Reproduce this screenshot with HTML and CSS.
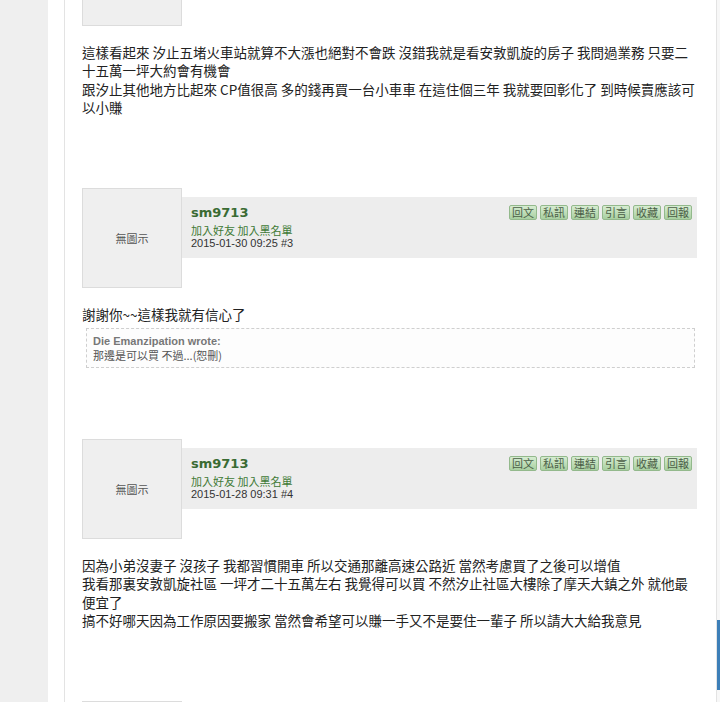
FILE: index.html
```html
<!DOCTYPE html>
<html lang="zh-Hant">
<head>
  <meta charset="UTF-8">
  <title>討論區 - 汐止 安敦凱旋</title>
  <link rel="stylesheet" href="styles.css">
</head>
<body>
  <div class="page">
    <!-- THREAD COLUMN -->
    <main class="thread">

      <!-- post #2 (scrolled, only bottom of avatar visible) -->
      <div class="post post-scrolled">
        <div class="post-head">
          <div class="avatar"></div>
        </div>
        <div class="post-body">
          這樣看起來 汐止五堵火車站就算不大漲也絕對不會跌 沒錯我就是看安敦凱旋的房子 我問過業務 只要二十五萬一坪大約會有機會<br>
          跟汐止其他地方比起來 CP值很高 多的錢再買一台小車車 在這住個三年 我就要回彰化了 到時候賣應該可以小賺
        </div>
      </div>

      <!-- post #3 -->
      <div class="post">
        <div class="post-head">
          <div class="avatar">無圖示</div>
          <div class="user-bar">
            <div class="user-info">
              <div class="user-name">sm9713</div>
              <div class="user-links"><a href="#">加入好友</a> <a href="#">加入黑名單</a></div>
              <div class="post-meta">2015-01-30 09:25 #3</div>
            </div>
            <div class="post-actions">
              <span class="act-btn">回文</span>
              <span class="act-btn">私訊</span>
              <span class="act-btn">連結</span>
              <span class="act-btn">引言</span>
              <span class="act-btn">收藏</span>
              <span class="act-btn">回報</span>
            </div>
          </div>
        </div>
        <div class="post-body">
          謝謝你~~這樣我就有信心了
          <div class="quote">
            <div class="quote-author">Die Emanzipation wrote:</div>
            <div class="quote-text">那邊是可以買 不過...(恕刪)</div>
          </div>
        </div>
      </div>

      <!-- post #4 -->
      <div class="post">
        <div class="post-head">
          <div class="avatar">無圖示</div>
          <div class="user-bar">
            <div class="user-info">
              <div class="user-name">sm9713</div>
              <div class="user-links"><a href="#">加入好友</a> <a href="#">加入黑名單</a></div>
              <div class="post-meta">2015-01-28 09:31 #4</div>
            </div>
            <div class="post-actions">
              <span class="act-btn">回文</span>
              <span class="act-btn">私訊</span>
              <span class="act-btn">連結</span>
              <span class="act-btn">引言</span>
              <span class="act-btn">收藏</span>
              <span class="act-btn">回報</span>
            </div>
          </div>
        </div>
        <div class="post-body">
          因為小弟沒妻子 沒孩子 我都習慣開車 所以交通那離高速公路近 當然考慮買了之後可以增值<br>
          我看那裏安敦凱旋社區 一坪才二十五萬左右 我覺得可以買 不然汐止社區大樓除了摩天大鎮之外 就他最便宜了<br>
          搞不好哪天因為工作原因要搬家 當然會希望可以賺一手又不是要住一輩子 所以請大大給我意見
        </div>
      </div>

      <!-- post #5 (cut off at the bottom) -->
      <div class="post">
        <div class="post-head">
          <div class="avatar"></div>
        </div>
      </div>

    </main>

    <!-- SIDEBAR (mostly off screen) -->
    <aside class="sidebar">
      <div class="side-ad"></div>
    </aside>
  </div>
</body>
</html>
```

FILE: styles.css
```css
/* Reset & page */
html, body {
  margin: 0;
  padding: 0;
  overflow: hidden;
}
body {
  background-color: #efefef;
  font-family: "Noto Sans CJK TC", "Liberation Sans", sans-serif;
  color: #222;
}
a {
  color: #3f7a36;
  text-decoration: none;
}
.page {
  display: flex;
  margin-left: 48px;
  padding-left: 16px;
  background-color: #fff;
  height: 702px;
}
/* Thread column */
.thread {
  width: 615px;
  padding: 0 19px 0 17px;
  border-left: 1px solid #e3e3e3;
  border-right: 1px solid #e3e3e3;
}
.post {
  padding-bottom: 71px;
}
.post-scrolled {
  margin-top: -74px;
}
.post-head {
  display: flex;
  align-items: flex-start;
}
.avatar {
  width: 98px;
  height: 98px;
  flex-shrink: 0;
  display: flex;
  align-items: center;
  justify-content: center;
  background-color: #efefef;
  border: 1px solid #dcdcdc;
  font-size: 11px;
  color: #555;
}
/* User bar */
.user-bar {
  flex: 1;
  display: flex;
  justify-content: space-between;
  align-items: flex-start;
  height: 61px;
  margin-top: 9px;
  padding: 0 5px 0 9px;
  background-color: #ededed;
}
.user-info {
  padding-top: 8px;
}
.user-name {
  font-family: "DejaVu Sans", sans-serif;
  font-weight: bold;
  font-size: 13px;
  line-height: 16px;
  color: #3a6b33;
  margin-bottom: 3px;
}
.user-links {
  font-size: 11px;
  line-height: 13px;
}
.post-meta {
  font-family: "Liberation Sans", sans-serif;
  font-size: 11px;
  line-height: 13px;
  color: #333;
}
.post-actions {
  display: flex;
  gap: 3px;
  margin-top: 8px;
}
.act-btn {
  display: block;
  padding: 0 2px;
  font-size: 11px;
  line-height: 13px;
  color: #4b5e47;
  background: linear-gradient(#d6ecd1, #a8cfa0);
  border: 1px solid #93b98c;
  border-radius: 2px;
}
/* Post body */
.post-body {
  margin-top: 17px;
  font-size: 13.5px;
  line-height: 18.4px;
}
.quote {
  margin: 5px 2px 0 4px;
  padding: 5px 6px;
  background-color: #fdfdfd;
  border: 1px dashed #cfcfcf;
  font-size: 11px;
  line-height: 14px;
}
.quote-author {
  font-family: "Liberation Sans", sans-serif;
  font-weight: bold;
  color: #777;
}
.quote-text {
  color: #555;
}
/* Sidebar */
.sidebar {
  flex: 1;
  background-color: #f7f7f7;
}
.side-ad {
  height: 70px;
  margin-top: 620px;
  background-color: #3d7fb8;
}
```
